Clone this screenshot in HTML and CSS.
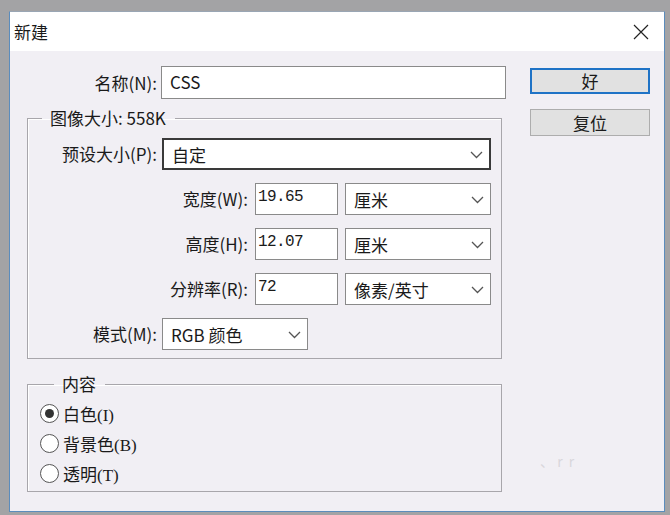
FILE: index.html
```html
<!DOCTYPE html>
<html lang="zh-CN">
<head>
    <meta charset="UTF-8">
    <title>新建</title>
    <link rel="stylesheet" href="styles.css">
</head>
<body>
    <div class="dialog">
        <div class="titlebar">
            <span class="title">新建</span>
            <svg class="close" width="16" height="16" viewBox="0 0 16 16">
                <path d="M1 1 L15 15 M15 1 L1 15" stroke="#222" stroke-width="1.2" fill="none"/>
            </svg>
        </div>

        <div class="content">
            <div class="main">
                <div class="row name-row">
                    <span class="lbl lbl-left">名称(N):</span>
                    <div class="field name-field">CSS</div>
                </div>

                <fieldset class="group size-group">
                    <legend>图像大小: 558K</legend>
                    <div class="row">
                        <span class="lbl lbl-left">预设大小(P):</span>
                        <div class="select select-wide dark">自定
                            <svg class="chev" width="13" height="8" viewBox="0 0 13 8"><polyline points="1,1 6.5,6.5 12,1" fill="none" stroke="#555" stroke-width="1.3"/></svg>
                        </div>
                    </div>
                    <div class="row">
                        <span class="lbl lbl-mid">宽度(W):</span>
                        <div class="num">19.65</div>
                        <div class="select select-unit">厘米
                            <svg class="chev" width="13" height="8" viewBox="0 0 13 8"><polyline points="1,1 6.5,6.5 12,1" fill="none" stroke="#555" stroke-width="1.3"/></svg>
                        </div>
                    </div>
                    <div class="row">
                        <span class="lbl lbl-mid">高度(H):</span>
                        <div class="num">12.07</div>
                        <div class="select select-unit">厘米
                            <svg class="chev" width="13" height="8" viewBox="0 0 13 8"><polyline points="1,1 6.5,6.5 12,1" fill="none" stroke="#555" stroke-width="1.3"/></svg>
                        </div>
                    </div>
                    <div class="row">
                        <span class="lbl lbl-mid">分辨率(R):</span>
                        <div class="num">72</div>
                        <div class="select select-unit">像素/英寸
                            <svg class="chev" width="13" height="8" viewBox="0 0 13 8"><polyline points="1,1 6.5,6.5 12,1" fill="none" stroke="#555" stroke-width="1.3"/></svg>
                        </div>
                    </div>
                    <div class="row">
                        <span class="lbl lbl-left">模式(M):</span>
                        <div class="select select-unit">RGB 颜色
                            <svg class="chev" width="13" height="8" viewBox="0 0 13 8"><polyline points="1,1 6.5,6.5 12,1" fill="none" stroke="#555" stroke-width="1.3"/></svg>
                        </div>
                    </div>
                </fieldset>

                <fieldset class="group fill-group">
                    <legend>内容</legend>
                    <div class="radio"><span class="dot checked"></span>白色(I)</div>
                    <div class="radio"><span class="dot"></span>背景色(B)</div>
                    <div class="radio"><span class="dot"></span>透明(T)</div>
                </fieldset>
            </div>

            <div class="buttons">
                <button class="btn primary">好</button>
                <button class="btn">复位</button>
                <span class="mark">、 r  r</span>
            </div>
        </div>
    </div>
</body>
</html>
```

FILE: styles.css
```css
body {
    margin: 0;
    padding: 11px 0 0 9px;
    background: #a3a3a5;
    font-family: "Noto Sans CJK SC", sans-serif;
    font-size: 17px;
    color: #1a1a1a;
    overflow: hidden;
}
.dialog {
    width: 654px;
    height: 499px;
    border: 1px solid #5b8cbc;
    border-top-color: #9aa6b4;
    background: #f1eff4;
    display: flex;
    flex-direction: column;
}
.titlebar {
    height: 39px;
    background: #fff;
    display: flex;
    align-items: center;
    justify-content: space-between;
    padding: 0 15px 0 4px;
    flex: none;
}
.title {
    font-size: 17px;
    line-height: 20px;
}
.close {
    display: block;
}
.content {
    display: flex;
    gap: 28px;
    padding: 15px 0 0 17px;
}
.main {
    width: 475px;
    display: flex;
    flex-direction: column;
}
.row {
    display: flex;
    align-items: center;
    height: 32px;
    margin-bottom: 13px;
}
.row:last-child {
    margin-bottom: 0;
}
.lbl {
    text-align: right;
    white-space: nowrap;
    flex: none;
    line-height: 20px;
}
.lbl-left {
    width: 130px;
    margin-right: 4px;
}
.name-row {
    width: 479px;
    height: 33px;
    margin-bottom: 9px;
}
.name-field {
    width: 345px;
    height: 33px;
    flex: none;
    box-sizing: border-box;
    border: 1.5px solid #8a8a8a;
    background: #fff;
    padding: 0 8px;
    line-height: 30px;
}
.group {
    margin: 0;
    border: 1px solid #a8a6ab;
    box-shadow: inset 1px 1px 0 #fff;
    padding: 0;
    min-inline-size: 0;
}
.group legend {
    margin-left: 14px;
    padding: 0 9px 0 8px;
    line-height: 20px;
}
.size-group {
    padding: 10px 0 8px 0;
}
.size-group .lbl-left {
    width: 129px;
    margin-right: 5px;
}
.lbl-mid {
    width: 220px;
    margin-right: 7px;
}
.num {
    width: 83px;
    height: 32px;
    flex: none;
    box-sizing: border-box;
    border: 1.5px solid #8a8a8a;
    background: #fff;
    margin-right: 7px;
    padding: 3px 2px 0;
    font-family: "Liberation Mono", monospace;
    font-size: 16px;
    letter-spacing: -0.6px;
    line-height: 20px;
}
.select {
    height: 32px;
    flex: none;
    box-sizing: border-box;
    border: 1.5px solid #8a8a8a;
    background: #fff;
    display: flex;
    align-items: center;
    justify-content: space-between;
    padding: 2px 6px 0 8px;
    line-height: 20px;
}
.select.dark {
    border: 2px solid #3a3a3a;
}
.select-wide {
    width: 329px;
}
.select-unit {
    width: 146px;
}
.fill-group {
    margin-top: 15px;
    padding: 4px 0 3px 12px;
}
.radio {
    height: 30px;
    display: flex;
    align-items: center;
    gap: 4px;
    font-family: "Liberation Serif", "Noto Sans CJK SC", serif;
    font-size: 17px;
}
.dot {
    width: 19px;
    height: 19px;
    box-sizing: border-box;
    border: 1.5px solid #555;
    border-radius: 50%;
    background: #fff;
    display: flex;
    align-items: center;
    justify-content: center;
}
.dot.checked::after {
    content: "";
    width: 9px;
    height: 9px;
    border-radius: 50%;
    background: #333;
}
.buttons {
    width: 120px;
    padding-top: 2px;
    display: flex;
    flex-direction: column;
    gap: 15px;
}
.btn {
    height: 27px;
    border: 1px solid #adadad;
    background: #e1e1e1;
    font-family: "Noto Sans CJK SC", sans-serif;
    font-size: 17px;
    color: #1a1a1a;
    padding: 0;
    line-height: 20px;
}
.btn.primary {
    height: 26px;
    border: 2px solid #1f73c6;
}
.mark {
    margin: 300px 0 0 10px;
    color: #d9d7dc;
    font-size: 14px;
    white-space: pre;
}
```
